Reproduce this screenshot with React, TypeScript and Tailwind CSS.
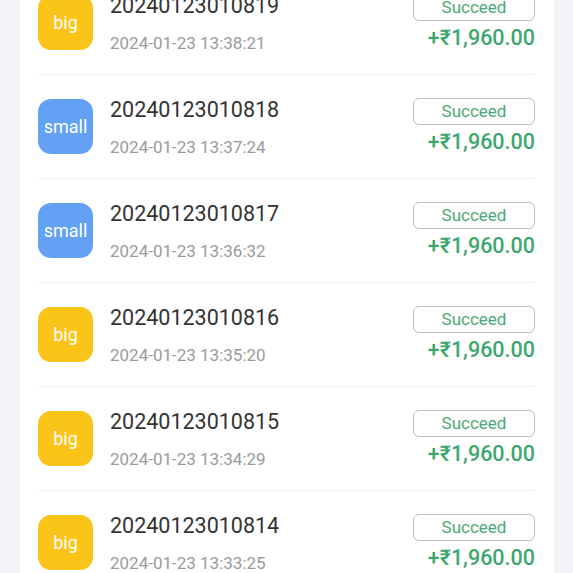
import React from 'react';

type Row = { id: string; time: string; kind: 'big' | 'small' };

const rows: Row[] = [
  { id: '20240123010819', time: '2024-01-23 13:38:21', kind: 'big' },
  { id: '20240123010818', time: '2024-01-23 13:37:24', kind: 'small' },
  { id: '20240123010817', time: '2024-01-23 13:36:32', kind: 'small' },
  { id: '20240123010816', time: '2024-01-23 13:35:20', kind: 'big' },
  { id: '20240123010815', time: '2024-01-23 13:34:29', kind: 'big' },
  { id: '20240123010814', time: '2024-01-23 13:33:25', kind: 'big' },
];

export default function App() {
  return (
    <div
      className="h-[573px] overflow-hidden bg-[#f4f5fb] pl-[20px] pr-[19px]"
      style={{ fontFamily: 'Roboto, "Noto Sans", sans-serif' }}
    >
      <div className="bg-white pl-[18px] pr-[19px] -mt-[29px] h-[640px]">
        {rows.map((r) => (
          <div key={r.id} className="flex items-center h-[104px] border-b border-[#eeeff2]">
            <div
              className={
                'w-[55px] h-[55px] rounded-[13px] flex items-center justify-center text-white text-[18px] shrink-0 ' +
                (r.kind === 'big' ? 'bg-[#fbc418]' : 'bg-[#62a1f4]')
              }
            >
              {r.kind}
            </div>
            <div className="ml-[17px] flex-1 flex flex-col">
              <div className="text-[21.5px] leading-[26px] text-[#333333]">{r.id}</div>
              <div className="text-[17px] leading-[20px] text-[#9a9a9a] mt-[14px]">{r.time}</div>
            </div>
            <div className="flex flex-col items-end">
              <div className="w-[122px] h-[27px] border border-[#b9bdc4] rounded-[6px] flex items-center justify-center text-[17px] text-[#4aa779]">
                Succeed
              </div>
              <div className="text-[21.5px] leading-[26px] text-[#3ea66f] font-medium mt-[4px]">+₹1,960.00</div>
            </div>
          </div>
        ))}
      </div>
    </div>
  );
}
